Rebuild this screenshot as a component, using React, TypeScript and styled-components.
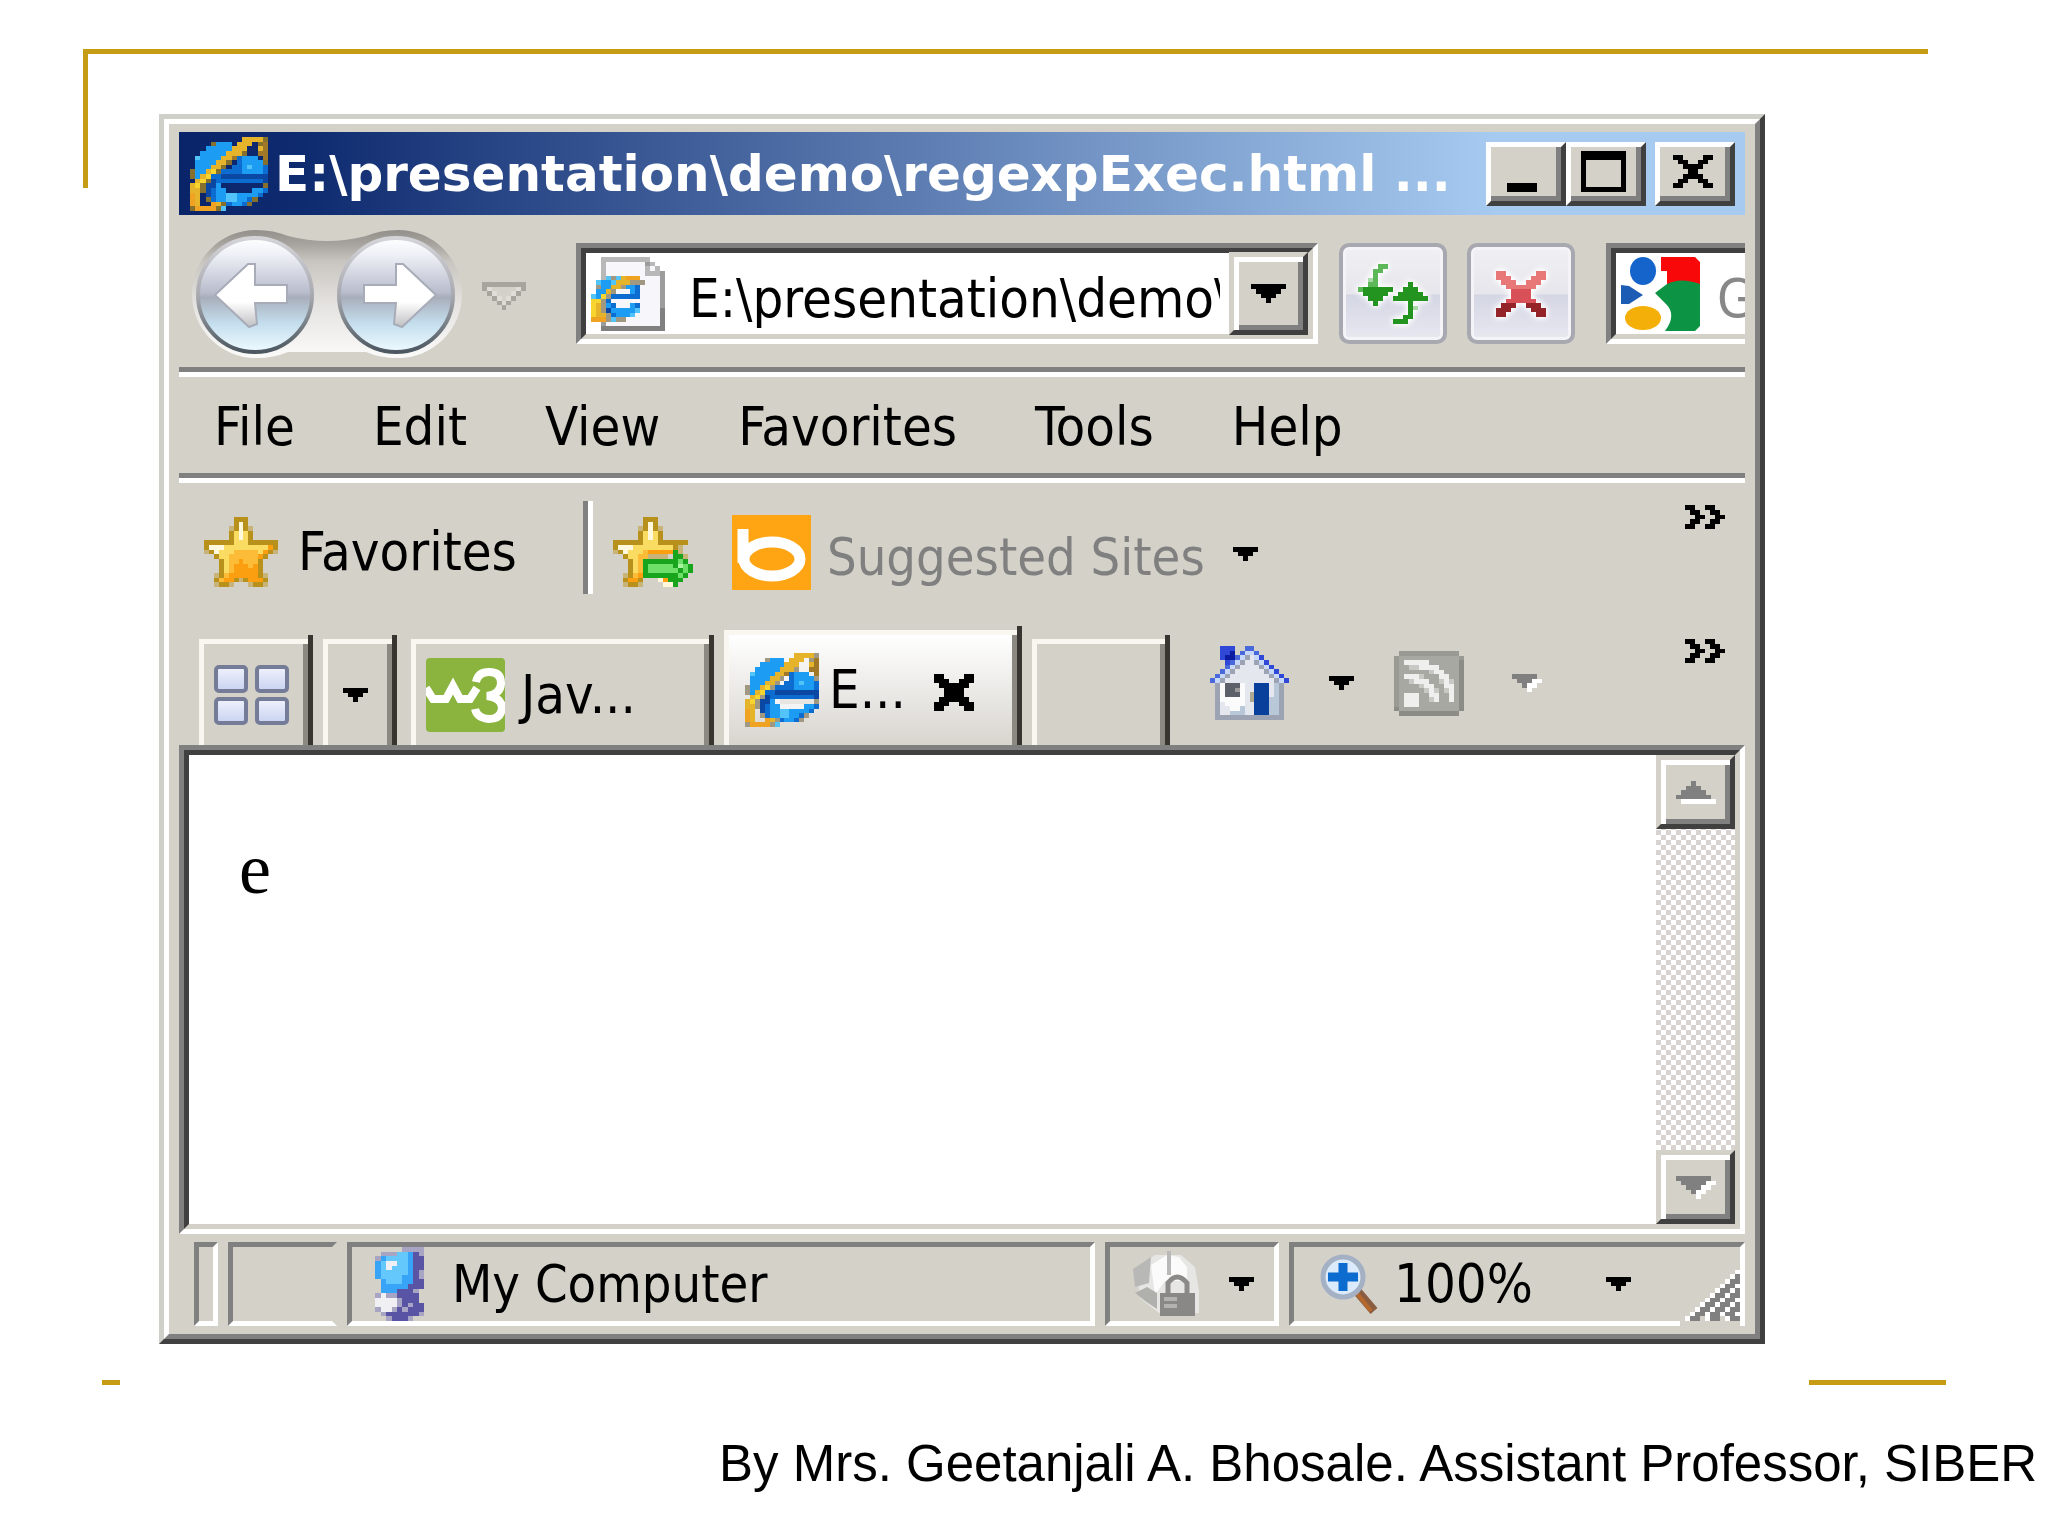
import React from "react";
import styled, { createGlobalStyle } from "styled-components";

const face = "#d4d1c9";
const grey = "#808080";
const dark = "#404040";
const gold = "#c69c14";
const uiFont = `"DejaVu Sans Condensed", "DejaVu Sans", sans-serif`;

const GlobalStyle = createGlobalStyle`
  *, *::before, *::after { box-sizing: border-box; }
  body { margin: 0; background: #fff; color: #000; overflow-x: hidden; }
  button, input { margin: 0; padding: 0; border: 0; background: none; color: inherit; font: inherit; }
  svg { display: block; flex: none; }
`;

/* ---------- bitmap icons ---------- */

type BitmapProps = {
  rows: string[];
  palette: Record<string, string>;
  width: number;
  height: number;
};

function Bitmap({ rows, palette, width, height }: BitmapProps) {
  const cells: React.ReactElement[] = [];
  rows.forEach((row, y) => {
    let x = 0;
    while (x < row.length) {
      let end = x + 1;
      while (end < row.length && row[end] === row[x]) end += 1;
      const fill = palette[row[x]];
      if (fill) {
        cells.push(<rect key={`${x}-${y}`} x={x} y={y} width={end - x} height={1} fill={fill} />);
      }
      x = end;
    }
  });
  return (
    <svg
      width={width}
      height={height}
      viewBox={`0 0 ${rows[0].length} ${rows.length}`}
      preserveAspectRatio="none"
      shapeRendering="crispEdges"
      aria-hidden="true"
    >
      {cells}
    </svg>
  );
}

const black = { "#": "#000" };

const arrowRows = ["#####", ".###.", "..#.."];
const DropArrow = () => <Bitmap rows={arrowRows} palette={black} width={25} height={14} />;

const closeRows = ["##....##", ".##..##.", "..####..", "...##...", "..####..", ".##..##.", "##....##"];
const tabCloseRows = ["##....##", "###..###", ".######.", "..####..", "..####..", ".######.", "###..###", "##....##"];
const maximizeRows = [
  "#########", "#########", "#.......#", "#.......#", "#.......#",
  "#.......#", "#.......#", "#.......#", "#########",
];
const chevronRows = ["##..##..", ".##..##.", "..##..##", ".##..##.", "##..##.."];

const ieRows = [
  "..........yyyys",
  "....sbbb.yyy.sd",
  "...bbbbbyyy..yd",
  "..bbbbbyyys..dd",
  ".cbbbbyydBbbb.d",
  ".bbbbyyswBbbbbs",
  ".bbbyyswBBbcbbB",
  "sbbyYsBBBBbbbbB",
  "sbyYBBnnnnnnnnn",
  ".yYsnBBBBBBBBBn",
  "yYsnnbw.......s",
  "yysnBbbwwwwwbbB",
  "oy.nBbbccbbbbB.",
  "oy.sBbbccbbBs..",
  "oy..oysBbbBs...",
  "soooosc........",
];
const iePalette = {
  y: "#e6b42a", Y: "#f8d42e", o: "#f0a322", d: "#a07828", s: "#a09880",
  b: "#1c9cf2", B: "#0c6cd0", n: "#0a48a4", c: "#52c4fa", w: "#f2f4f6",
};
const ieTitlePalette = { ...iePalette, w: "", s: "#86702e" };

const pageRows = [
  "..llllllllll...",
  "..lwwwwwwwwml..",
  "..lwwwwwwwwlwl.",
  "..lwwwwwwwwlllm",
  "..lcscyooowwwwm",
  ".cbbcyyyssswwwm",
  ".sbbyysbbBwwwwm",
  ".bbyswwwbBwwwwm",
  "cbYsBBBBBBwwwwm",
  "YYsBwwwwwwwwwwm",
  "YysbBwwwbBwwwwm",
  "YysnbbbbbcwwwwM",
  "YyysBbbbcwwwwwM",
  "oooscsswwwwwwwM",
  "..mwwwwwwwwwwwM",
  "..MMMMMMMMMMMMM",
];
const pagePalette = { ...iePalette, w: "#f7f7fb", l: "#b8b8b8", m: "#9c9c9c", M: "#808080" };

const starRows = [
  "......ddd......",
  "......dwd......",
  ".....sdwds.....",
  ".....dYwYd.....",
  ".....dYwYd.....",
  "ddddddYYYdddddd",
  "dwwwYYYYYYYYYod",
  "sdwYYYyyyyyYods",
  "..dYYyyyyyyod..",
  "...dYyyoyyyd...",
  "...dYyoooyod...",
  "...dYyoooood...",
  "..sdyoooooods..",
  "..dyoodsdoood..",
  "..sdds...sdds..",
];
const starPalette = {
  d: "#b8901c", s: "#c8b478", w: "#fff8dc", Y: "#fbdc62", y: "#fcbc38", o: "#fb9e10",
};
const starAddRows = [
  "......ddd.......",
  "......dwd.......",
  ".....sdwds......",
  ".....dYwYd......",
  ".....dYwYd......",
  "ddddddYYYdddddd.",
  "dwwwYYYYYYYYds..",
  "sdwYYYyoooooGs..",
  "..dYYyyssss.GGs.",
  "...dYyGGGGGGGgG.",
  "...dYyGgggggGhgG",
  "...dYyGggggggGgG",
  "..sdyoGGGGGGGgG.",
  "..dood...woGGG..",
  "..sdds....wwG...",
];
const starAddPalette = { ...starPalette, G: "#18a41c", g: "#6ee06a", h: "#a8f4a0" };

const houseRows = [
  "..BBB..bb.......",
  "..BBn.bllb......",
  "..BnnblgwlB.....",
  "...BblgwwglB....",
  "...blgwwwwglB...",
  "..blgwwwwwwglB..",
  ".blgwwwwwwwwglB.",
  "blgwwwwwwwwwwglB",
  ".gWkkkWwwNNNwug.",
  ".gWkkmWwwNNNwug.",
  ".gWkkkWwtNNNwug.",
  ".gWWWWWwtNNNuug.",
  ".gwWWWWwwNNNuug.",
  ".gwwWWuwwNNNuug.",
  ".gwwuuuwwNNNuug.",
  ".gggggggggggggg.",
];
const housePalette = {
  B: "#3048d8", b: "#4868dc", n: "#0c1ca0", l: "#c8d8f8", g: "#9ca4b4",
  w: "#e4e8ee", W: "#fbfbfb", u: "#b8c8d8", k: "#5c6068", m: "#9a9a9a",
  N: "#08409c", t: "#b0a890",
};

const rssRows = [
  ".gggggggggggg.",
  "gmmmmmmmmmmmmg",
  "gmwwwwwmmmmmmd",
  "gmmllwwwwmmmmd",
  "gmmmmmmlwwmmmd",
  "gmwwwlmmmwwmmd",
  "gmmlwwwmmlwlmd",
  "gmmmmlwwmmwwmd",
  "gmmmmmlwlmlwmd",
  "gmwwwmmwwmmwmd",
  "gmwwwmmlwmmwmd",
  "gmwwwmmmmmmmmd",
  "dmmmmmmmmmmmmd",
  ".dddddddddddd.",
];
const rssPalette = { g: "#9a9a94", d: "#8c8c86", m: "#a8a8a2", l: "#c8c8c4", w: "#efefed" };

const computerRows = [
  "......ssss",
  "..sssccbps",
  ".sbccccbpp",
  ".bcwwccbpp",
  ".bcwcccbpp",
  ".bcccccbps",
  ".bccccbbps",
  "..bcccbbpp",
  "..bbbbbppp",
  "..bbbppps.",
  ".swsspppp.",
  ".wwwwsppp.",
  ".wwwwspspp",
  ".swwspsppp",
  "..spppppps",
  "...sppps..",
];
const computerPalette = { s: "#a8a4c4", b: "#38a4f8", c: "#64c8fc", w: "#f0f0f4", p: "#5a54a4" };

const gripRows = [
  "............", "...........w", "..........wg", ".........wgg", "........wggw",
  ".......wggwg", "......wggwgg", ".....wggwggw", "....wggwggwg", "...wggwggwgg",
  "..wggwggwggw", ".wgg.wgg.wgg",
];
const gripPalette = { w: "#fff", g: grey };

const stopRows = [
  "aa......aa", "aaa....aaa", ".aaa..aaa.", "..aaaaaa..", "...bbbb...",
  "...bbbb...", "..bbbbbb..", ".ccc..ccc.", "ccc....ccc", "cc......cc",
];
const stopPalette = { a: "#e87878", b: "#d85058", c: "#942428" };

const refreshRows = [
  "....gg........",
  "...gg.........",
  "...g..........",
  "..lg..........",
  "..gg......G...",
  "gGGGGGG..GGG..",
  ".GGGGG..GGGGG.",
  "..GGG..GGGGGGG",
  "...G......G...",
  "..........Gl..",
  "..........G...",
  ".........GG...",
  ".......GGG....",
];
const refreshPalette = { g: "#5cb858", l: "#a8d8a4", G: "#239420" };

const upRows = ["...g....", "..ggg...", ".ggggg..", "ggggggg.", ".wwwwwww"];
const downRows = ["ggggggg.", ".gggggww", "..gggww.", "...gww..", "....w..."];
const feedArrowRows = ["ggggg.", ".gggww", "..gww.", "...w.."];
const historyRows = ["ggggggggg", "ga.....ag", ".ga...ag.", "..ga.ag..", "...gag...", "....g...."];
const historyPalette = { g: "#a8a49e", a: "#e0ddd8" };

const BingIcon = () => (
  <svg width="79" height="75" viewBox="0 0 79 75" aria-hidden="true">
    <rect width="79" height="75" fill="#ffa514" />
    <path d="M11 14V48" stroke="#fff" strokeWidth="11" fill="none" />
    <ellipse cx="40" cy="44" rx="28" ry="17" stroke="#fff" strokeWidth="11" fill="none" />
  </svg>
);

const W3Icon = () => (
  <svg width="79" height="74" viewBox="0 0 79 74" aria-hidden="true">
    <rect width="79" height="74" rx="4" fill="#8ab43e" />
    <path d="M0 30L7 41H20L27 28L34 41H44L51 30" stroke="#fff" strokeWidth="8" fill="none" />
    <path
      d="M50 24Q52 14 63 14Q75 14 75 25Q75 36 61 38Q76 40 76 50Q75 61 63 61Q51 60 49 51"
      stroke="#fff"
      strokeWidth="8"
      fill="none"
    />
  </svg>
);

const GoogleIcon = () => (
  <svg width="79" height="74" viewBox="0 0 79 74" aria-hidden="true">
    <path d="M40 0H74L79 5V28H46V14H40Z" fill="#f80808" />
    <path d="M46 27Q60 20 79 27V69L74 74H44Q56 58 45 47L34 36Z" fill="#0c9444" />
    <ellipse cx="22" cy="14" rx="13" ry="14" fill="#1464cc" />
    <path d="M0 28L8 29L22 38L8 47H0Z" fill="#1c5cb4" />
    <ellipse cx="22" cy="61" rx="18" ry="12" fill="#f4b008" />
  </svg>
);

const QuickTabsIcon = () => (
  <svg width="75" height="60" viewBox="0 0 75 60" aria-hidden="true">
    <defs>
      <linearGradient id="pane" x1="0" y1="0" x2="0" y2="1">
        <stop offset="0" stopColor="#f0f2fc" />
        <stop offset="1" stopColor="#c8d2f0" />
      </linearGradient>
    </defs>
    {[[2, 2], [43, 2], [2, 34], [43, 34]].map(([x, y]) => (
      <rect key={`${x}-${y}`} x={x} y={y} width="30" height="24" rx="3" fill="url(#pane)" stroke="#747c98" strokeWidth="4" />
    ))}
  </svg>
);

const FilterIcon = () => (
  <svg width="79" height="66" viewBox="0 0 79 66" aria-hidden="true">
    <path d="M14 18L34 4H60L74 16L78 40V62H38L20 48Z" fill="#e6e6e4" />
    <path d="M30 14L46 4L58 6L66 16V30H44L34 44Z" fill="#fbfbfb" />
    <path d="M0 28L14 42L26 36L36 42V58L24 50L12 40Z" fill="#b0b0ac" />
    <path d="M12 18L30 6L28 32L14 36Z" fill="#b8b8b6" />
    <path d="M47 44V32Q56 20 66 32V44" fill="none" stroke="#8c8a88" strokeWidth="5" />
    <rect x="39" y="42" width="35" height="23" fill="#8a8886" />
    <path d="M43 48H56M43 55H56" stroke="#b4b2b0" strokeWidth="4" />
    <path d="M48 0V24" stroke="#b8b8b8" strokeWidth="4" />
  </svg>
);

const MagnifierIcon = () => (
  <svg width="60" height="61" viewBox="0 0 60 61" aria-hidden="true">
    <path d="M38 37L55 57" stroke="#8a5c40" strokeWidth="9" />
    <path d="M37 38L52 57" stroke="#b4682c" strokeWidth="4" />
    <circle cx="24" cy="23" r="20" fill="#dcebfb" stroke="#a4b0c4" strokeWidth="5" />
    <path d="M24 9V37M9 23H39" stroke="#0c6cd0" strokeWidth="9" />
  </svg>
);

function TravelDisc({ back }: { back?: boolean }) {
  const id = back ? "disc-back" : "disc-forward";
  const arrow = back
    ? "M20 61L53 30H60V51H92V69H60L62 90L54 93Z"
    : "M100 61L67 30H60V51H28V69H60L58 90L66 93Z";
  return (
    <svg width="120" height="120" viewBox="0 0 120 120" aria-hidden="true">
      <defs>
        <linearGradient id={id} x1="0" y1="0" x2="0" y2="1">
          <stop offset="0" stopColor="#fff" />
          <stop offset="0.15" stopColor="#eef0f6" />
          <stop offset="0.48" stopColor="#b8bccc" />
          <stop offset="0.52" stopColor="#a8aeba" />
          <stop offset="0.75" stopColor="#c4deee" />
          <stop offset="1" stopColor="#effbff" />
        </linearGradient>
        <linearGradient id={`${id}-rim`} x1="0" y1="0" x2="0" y2="1">
          <stop offset="0" stopColor="#d4d4d8" />
          <stop offset="0.5" stopColor="#a8aab0" />
          <stop offset="1" stopColor="#4c5860" />
        </linearGradient>
        <linearGradient id={`${id}-arrow`} x1="0" y1="0" x2="0" y2="1">
          <stop offset="0.6" stopColor="#fff" />
          <stop offset="1" stopColor="#c0c0c4" />
        </linearGradient>
      </defs>
      <circle cx="60" cy="61" r="57" fill={`url(#${id})`} stroke={`url(#${id}-rim)`} strokeWidth="4" />
      <path d={arrow} fill={`url(#${id}-arrow)`} stroke="#a8acb8" strokeWidth="2" />
    </svg>
  );
}

/* ---------- slide ---------- */

const Slide = styled.div`
  min-height: 100vh;
  overflow: hidden;
  display: flex;
  flex-direction: column;
  font-family: "Liberation Sans", Arial, sans-serif;
`;

const Stage = styled.div`
  display: grid;
  grid-template-columns: minmax(0, 1fr);
  padding: 49px 120px 0 83px;
`;

const Corner = styled.div`
  grid-area: 1 / 1;
  height: 139px;
  border-top: 5px solid ${gold};
  border-left: 5px solid ${gold};
`;

const WindowFrame = styled.section`
  grid-area: 1 / 1;
  margin: 65px 163px 0 76px;
  border: 5px solid;
  border-color: #d0d0cb ${dark} ${dark} #d0d0cb;
  font-family: ${uiFont};
  font-size: 54px;
  line-height: 64px;
  white-space: nowrap;
`;

const WindowBody = styled.div`
  border: 5px solid;
  border-color: #fff ${grey} ${grey} #fff;
  padding: 8px 10px;
  background: ${face};
  display: flex;
  flex-direction: column;
`;

const Rules = styled.div`
  display: flex;
  justify-content: space-between;
  padding: 36px 102px 0;
`;

const Rule = styled.span<{ $w: number }>`
  width: ${(p) => p.$w}px;
  height: 5px;
  background: ${gold};
`;

const Caption = styled.p`
  margin: 49px 0 0;
  padding-left: 719px;
  font-size: 51px;
  line-height: 60px;
  white-space: nowrap;
`;

/* ---------- title bar ---------- */

const TitleBar = styled.header`
  height: 83px;
  padding: 0 10px 0 11px;
  display: flex;
  align-items: center;
  background: linear-gradient(to right, #0a246a 0%, #0f2b70 8%, #a6caf0 84%);
`;

const Title = styled.h1`
  margin: 0;
  padding-left: 7px;
  flex: 1;
  min-width: 0;
  color: #fff;
  font-family: "DejaVu Sans", sans-serif;
  font-size: 50px;
  line-height: 64px;
  font-weight: bold;
`;

const CaptionButton = styled.button<{ $gap?: boolean; $low?: boolean }>`
  width: 80px;
  height: 64px;
  margin-left: ${(p) => (p.$gap ? 9 : 0)}px;
  padding: ${(p) => (p.$low ? "0 8px 9px 0" : "0 5px 5px 0")};
  flex: none;
  display: flex;
  align-items: ${(p) => (p.$low ? "flex-end" : "center")};
  justify-content: center;
  background: ${face};
  border: 5px solid;
  border-color: #fff ${dark} ${dark} #fff;
  box-shadow: inset -5px -5px 0 ${grey};
`;

/* ---------- navigation ---------- */

const NavBar = styled.div`
  height: 152px;
  padding: 5px 0 0 11px;
  display: flex;
  align-items: center;
  overflow: hidden;
`;

const TravelPair = styled.div`
  position: relative;
  width: 274px;
  height: 130px;
  padding: 5px 8px 5px 5px;
  flex: none;
  display: flex;
  justify-content: space-between;
  & > svg { position: absolute; left: 0; top: 0; }
`;

const TravelButton = styled.button`
  position: relative;
  width: 120px;
  height: 120px;
  border-radius: 50%;
`;

const HistoryButton = styled.button`
  margin: 4px 50px 0 18px;
`;

const Field = styled.div<{ $clipped?: boolean }>`
  height: 101px;
  flex: ${(p) => (p.$clipped ? "0 0 139px" : "1")};
  min-width: 0;
  border: 5px solid;
  border-color: ${grey} #fff #fff ${grey};
  border-right-width: ${(p) => (p.$clipped ? 0 : 5)}px;
`;

const FieldInner = styled.label<{ $clipped?: boolean }>`
  height: 91px;
  padding-left: 5px;
  display: flex;
  align-items: center;
  background: #fff;
  border: 5px solid;
  border-color: ${dark} ${face} ${face} ${dark};
  border-right-width: ${(p) => (p.$clipped ? 0 : 5)}px;
`;

const FieldInput = styled.input<{ $gap: number; $end: number }>`
  flex: 1;
  min-width: 0;
  height: 70px;
  margin: 10px ${(p) => p.$end}px 0 ${(p) => p.$gap}px;
  outline: 0;
  &::placeholder { color: #888; opacity: 1; }
`;

const BevelButton = styled.button<{ $h: number }>`
  width: 79px;
  height: ${(p) => p.$h}px;
  flex: none;
  display: flex;
  align-items: center;
  justify-content: center;
  background: ${face};
  border: 5px solid;
  border-color: ${face} ${dark} ${dark} ${face};
  box-shadow: inset 5px 5px 0 #fff, inset -5px -5px 0 ${grey};
`;

const ToolButton = styled.button<{ $gap: number }>`
  width: 108px;
  height: 101px;
  flex: none;
  margin-left: ${(p) => p.$gap}px;
  display: flex;
  align-items: center;
  justify-content: center;
  border: 4px solid #a8a8b0;
  border-radius: 10px;
  background: linear-gradient(#f0f0f4 0%, #e6e6ec 50%, #d4d6e4 52%, #e8e8f0 100%);
  box-shadow: inset 0 0 0 3px #f4f4f8;
  & > svg { filter: drop-shadow(0 0 3px #fff) drop-shadow(0 0 2px #fff); }
`;

const SearchSlot = styled.div`
  display: flex;
  flex: none;
  margin-left: 31px;
`;

/* ---------- menu ---------- */

const Divider = styled.hr`
  width: 100%;
  height: 10px;
  margin: 0;
  border: 0;
  border-top: 5px solid ${grey};
  background: #fff;
`;

const MenuBar = styled.nav`
  height: 96px;
  padding: 4px 0 0 35px;
  display: flex;
  align-items: center;
  gap: 78px;
`;

/* ---------- favorites bar ---------- */

const FavoritesBar = styled.div`
  height: 138px;
  padding: 0 20px 0 25px;
  display: flex;
  align-items: center;
`;

const FavoritesButton = styled.button`
  display: flex;
  align-items: center;
  gap: 20px;
`;

const Separator = styled.span`
  width: 10px;
  height: 93px;
  margin: 0 20px 10px 66px;
  background: linear-gradient(to right, ${grey} 50%, #fff 50%);
`;

const SiteButton = styled.button`
  margin-left: 39px;
  display: flex;
  align-items: center;
  gap: 16px;
  color: ${grey};
`;

const SiteLabel = styled.span`
  padding-top: 9px;
  font-size: 52px;
`;

const ArrowSlot = styled.span`
  padding: 3px 0 0 12px;
`;

const MoreButton = styled.button<{ $top: number }>`
  align-self: flex-start;
  margin: ${(p) => p.$top}px 0 0 auto;
`;

/* ---------- tabs ---------- */

const TabRow = styled.div`
  height: 124px;
  padding: 0 20px;
  display: flex;
  align-items: flex-end;
  gap: 10px;
`;

const Tab = styled.button<{ $w: number; $active?: boolean; $gap?: number; $center?: boolean }>`
  position: relative;
  width: ${(p) => p.$w}px;
  height: ${(p) => (p.$active ? 115 : 106)}px;
  margin-left: ${(p) => p.$gap ?? 0}px;
  padding: 0 ${(p) => (p.$center ? 14 : 0)}px 0 ${(p) => (p.$center ? 0 : p.$active ? 16 : 10)}px;
  flex: none;
  display: flex;
  align-items: center;
  justify-content: ${(p) => (p.$center ? "center" : "flex-start")};
  gap: ${(p) => (p.$active ? 10 : 16)}px;
  background: ${(p) => (p.$active ? "linear-gradient(#fff, #d8d5cf)" : face)};
  border: solid #faf6f0;
  border-width: 5px 0 0 5px;
  box-shadow: inset -10px 0 0 #8c8882;
  &::after {
    content: "";
    position: absolute;
    top: -9px;
    right: 0;
    bottom: 0;
    width: 5px;
    background: #38342f;
  }
`;

const TabClose = styled.span`
  padding: 4px 0 0 18px;
`;

const Commands = styled.div`
  height: 124px;
  margin-left: 30px;
  display: flex;
  align-items: center;
  gap: 40px;
`;

const FeedArrow = styled.button`
  padding-left: 8px;
`;

/* ---------- page ---------- */

const Pane = styled.div`
  height: 489px;
  border: 5px solid;
  border-color: ${grey} #fff #fff ${grey};
`;

const PaneInner = styled.div`
  height: 479px;
  display: flex;
  background: #fff;
  border: 5px solid;
  border-color: ${dark} ${face} ${face} ${dark};
`;

const Page = styled.main`
  flex: 1;
  padding: 72px 50px;
  font-family: "Liberation Serif", "Times New Roman", serif;
  font-size: 72px;
  line-height: 84px;
`;

const ScrollBar = styled.div`
  width: 79px;
  display: flex;
  flex-direction: column;
  justify-content: space-between;
  background: repeating-conic-gradient(#d8d2d0 0% 25%, #fff 0% 50%) 0 0 / 10px 10px;
`;

/* ---------- status bar ---------- */

const StatusBar = styled.footer`
  height: 92px;
  padding: 8px 0 0 15px;
  display: flex;
  gap: 10px;
`;

const StatusCell = styled.div<{ $w?: number; $pad?: number; $open?: boolean }>`
  position: relative;
  flex: ${(p) => (p.$w ? `0 0 ${p.$w}px` : "1")};
  height: 84px;
  padding-left: ${(p) => p.$pad ?? 0}px;
  display: flex;
  align-items: center;
  border: 5px solid;
  border-color: ${grey} ${(p) => (p.$open ? face : "#fff")} #fff ${grey};
`;

const StatusButton = styled.button<{ $gap: number }>`
  display: flex;
  align-items: center;
  gap: ${(p) => p.$gap}px;
`;

const StatusText = styled.span`
  font-size: 52px;
`;

const ZoomArrow = styled.span`
  padding-left: 58px;
`;

const Grip = styled.span`
  position: absolute;
  right: 0;
  bottom: -5px;
  padding-bottom: 5px;
  background: ${face};
`;

const menus = ["File", "Edit", "View", "Favorites", "Tools", "Help"];

export default function App() {
  return (
    <>
      <GlobalStyle />
      <Slide>
        <Stage>
          <Corner />
          <WindowFrame>
            <WindowBody>
              <TitleBar>
                <Bitmap rows={ieRows} palette={ieTitlePalette} width={78} height={74} />
                <Title>E:\presentation\demo\regexpExec.html ...</Title>
                <CaptionButton $low aria-label="Minimize">
                  <Bitmap rows={["#"]} palette={black} width={30} height={9} />
                </CaptionButton>
                <CaptionButton aria-label="Maximize">
                  <Bitmap rows={maximizeRows} palette={black} width={45} height={41} />
                </CaptionButton>
                <CaptionButton $gap aria-label="Close">
                  <Bitmap rows={closeRows} palette={black} width={40} height={33} />
                </CaptionButton>
              </TitleBar>

              <NavBar>
                <TravelPair>
                  <svg width="274" height="130" viewBox="0 0 274 130" aria-hidden="true">
                    <defs>
                      <linearGradient id="halo" x1="0" y1="0" x2="0" y2="1">
                        <stop offset="0" stopColor="#8c8984" />
                        <stop offset="0.12" stopColor="#a4a19c" />
                        <stop offset="0.25" stopColor="#c8c5c0" />
                        <stop offset="0.6" stopColor="#e8e6e4" />
                        <stop offset="1" stopColor="#fff" />
                      </linearGradient>
                    </defs>
                    <path
                      d="M66 1Q84 1 98 7Q137 17 176 7Q190 1 208 1A64 64 0 0 1 208 129Q190 129 176 123H98Q84 129 66 129A64 64 0 0 1 66 1Z"
                      fill="url(#halo)"
                      opacity="0.9"
                    />
                  </svg>
                  <TravelButton aria-label="Back"><TravelDisc back /></TravelButton>
                  <TravelButton aria-label="Forward"><TravelDisc /></TravelButton>
                </TravelPair>
                <HistoryButton aria-label="Recent pages">
                  <Bitmap rows={historyRows} palette={historyPalette} width={44} height={28} />
                </HistoryButton>
                <Field>
                  <FieldInner>
                    <Bitmap rows={pageRows} palette={pagePalette} width={74} height={74} />
                    <FieldInput $gap={24} $end={9} aria-label="Address" defaultValue={"E:\\presentation\\demo\\"} />
                    <BevelButton $h={83} aria-label="Show addresses">
                      <Bitmap rows={["#######", ".#####.", "..###..", "...#..."]} palette={black} width={35} height={19} />
                    </BevelButton>
                  </FieldInner>
                </Field>
                <ToolButton $gap={21} aria-label="Refresh">
                  <Bitmap rows={refreshRows} palette={refreshPalette} width={70} height={60} />
                </ToolButton>
                <ToolButton $gap={20} aria-label="Stop">
                  <Bitmap rows={stopRows} palette={stopPalette} width={50} height={46} />
                </ToolButton>
                <SearchSlot>
                  <Field $clipped>
                    <FieldInner $clipped>
                      <GoogleIcon />
                      <FieldInput $gap={17} $end={0} aria-label="Search" placeholder="Google" />
                    </FieldInner>
                  </Field>
                </SearchSlot>
              </NavBar>

              <Divider />
              <MenuBar>
                {menus.map((name) => (
                  <button key={name}>{name}</button>
                ))}
              </MenuBar>
              <Divider />

              <FavoritesBar>
                <FavoritesButton>
                  <Bitmap rows={starRows} palette={starPalette} width={74} height={70} />
                  Favorites
                </FavoritesButton>
                <Separator />
                <button aria-label="Add to Favorites Bar">
                  <Bitmap rows={starAddRows} palette={starAddPalette} width={80} height={70} />
                </button>
                <SiteButton>
                  <BingIcon />
                  <SiteLabel>Suggested Sites</SiteLabel>
                  <ArrowSlot><DropArrow /></ArrowSlot>
                </SiteButton>
                <MoreButton $top={22} aria-label="More favorites">
                  <Bitmap rows={chevronRows} palette={black} width={40} height={24} />
                </MoreButton>
              </FavoritesBar>

              <TabRow>
                <Tab $w={114} $center aria-label="Quick Tabs"><QuickTabsIcon /></Tab>
                <Tab $w={74} $center aria-label="Tab list"><DropArrow /></Tab>
                <Tab $w={303} $gap={4}>
                  <W3Icon />
                  Jav...
                </Tab>
                <Tab $w={298} $active>
                  <Bitmap rows={ieRows} palette={iePalette} width={74} height={74} />
                  E...
                  <TabClose>
                    <Bitmap rows={tabCloseRows} palette={black} width={40} height={37} />
                  </TabClose>
                </Tab>
                <Tab $w={138} aria-label="New Tab" />
                <Commands>
                  <button aria-label="Home"><Bitmap rows={houseRows} palette={housePalette} width={79} height={74} /></button>
                  <button aria-label="Home options"><DropArrow /></button>
                  <button aria-label="Feeds"><Bitmap rows={rssRows} palette={rssPalette} width={70} height={65} /></button>
                  <FeedArrow aria-label="Feed options">
                    <Bitmap rows={feedArrowRows} palette={gripPalette} width={30} height={18} />
                  </FeedArrow>
                </Commands>
                <MoreButton $top={18} aria-label="More commands">
                  <Bitmap rows={chevronRows} palette={black} width={40} height={24} />
                </MoreButton>
              </TabRow>

              <Pane>
                <PaneInner>
                  <Page>e</Page>
                  <ScrollBar>
                    <BevelButton $h={74} aria-label="Scroll up">
                      <Bitmap rows={upRows} palette={gripPalette} width={40} height={23} />
                    </BevelButton>
                    <BevelButton $h={74} aria-label="Scroll down">
                      <Bitmap rows={downRows} palette={gripPalette} width={40} height={23} />
                    </BevelButton>
                  </ScrollBar>
                </PaneInner>
              </Pane>

              <StatusBar>
                <StatusCell $w={24} />
                <StatusCell $w={109} $open />
                <StatusCell $pad={18}>
                  <StatusButton $gap={28}>
                    <Bitmap rows={computerRows} palette={computerPalette} width={54} height={74} />
                    <StatusText>My Computer</StatusText>
                  </StatusButton>
                </StatusCell>
                <StatusCell $w={174} $pad={11}>
                  <StatusButton $gap={29} aria-label="Filter">
                    <FilterIcon />
                    <DropArrow />
                  </StatusButton>
                </StatusCell>
                <StatusCell $w={456} $pad={25}>
                  <StatusButton $gap={15}>
                    <MagnifierIcon />
                    100%
                    <ZoomArrow><DropArrow /></ZoomArrow>
                  </StatusButton>
                  <Grip><Bitmap rows={gripRows} palette={gripPalette} width={60} height={56} /></Grip>
                </StatusCell>
              </StatusBar>
            </WindowBody>
          </WindowFrame>
        </Stage>
        <Rules>
          <Rule $w={18} />
          <Rule $w={137} />
        </Rules>
        <Caption>By Mrs. Geetanjali A. Bhosale. Assistant Professor, SIBER</Caption>
      </Slide>
    </>
  );
}
